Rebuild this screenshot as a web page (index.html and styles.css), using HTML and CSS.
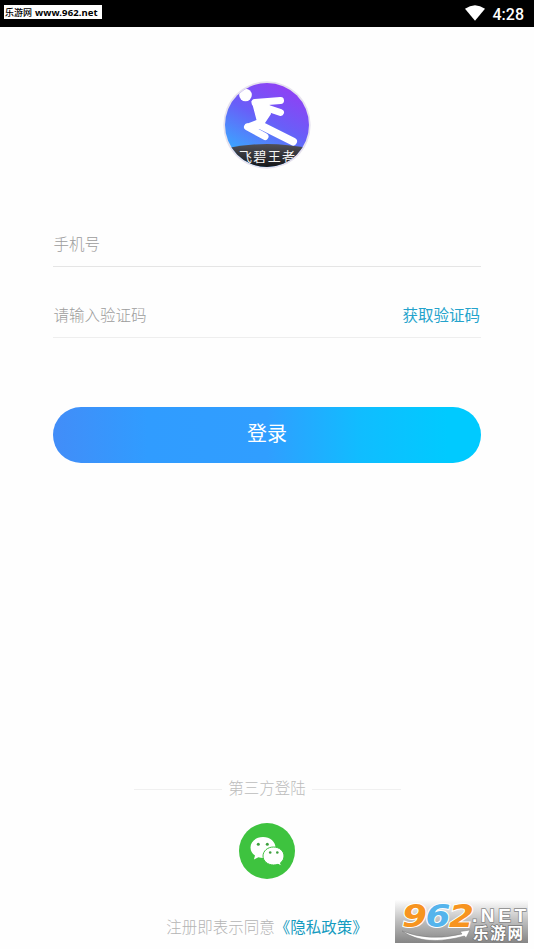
FILE: index.html
```html
<!DOCTYPE html>
<html lang="zh-CN">
<head>
<meta charset="utf-8">
<title>登录</title>
<link rel="stylesheet" href="styles.css">
</head>
<body>
<header class="status">
  <span class="site-tag"><span class="site-name">乐游网</span><span class="site-url">www.962.net</span></span>
  <span class="status-right">
    <svg class="wifi" width="20" height="16" viewBox="0 0 20 16"><path d="M0 3.8Q10-3.2 20 3.8L10 15.8Z" fill="#fff"/></svg>
    <span class="clock">4:28</span>
  </span>
</header>
<main class="page">
  <svg class="logo" width="88" height="88" viewBox="0 0 88 88">
    <defs>
      <linearGradient id="sky" x1=".7" y1="0" x2=".25" y2=".9"><stop offset="0" stop-color="#933df4"/><stop offset=".48" stop-color="#685ff8"/><stop offset="1" stop-color="#36adff"/></linearGradient>
      <linearGradient id="ground" x1="0" y1="0" x2="0" y2="1"><stop offset="0" stop-color="#515158"/><stop offset="1" stop-color="#101012"/></linearGradient>
      <clipPath id="disc"><circle cx="44" cy="44" r="42"/></clipPath>
    </defs>
    <circle cx="44" cy="44" r="43.7" fill="#e6e2ee"/>
    <g clip-path="url(#disc)">
      <path d="M0 0H88V88H0Z" fill="url(#sky)"/>
      <path d="M0 68Q44 58 88 68V88H0Z" fill="url(#ground)"/>
      <g fill="none" stroke="#fff" stroke-linejoin="round" stroke-linecap="round">
        <path d="M32 21.500L57.500 19.500M38 25L57.500 31.500" stroke-width="7"/>
        <path d="M24.500 46L42 55.500" stroke-width="7"/>
        <path d="M37 44L70 60.500" stroke-width="8"/>
      </g>
      <path d="M28.500 20L46 21L48 33L38 48L23 49L22 43.500L33.500 39Z" fill="#fff"/>
      <circle cx="22.500" cy="14" r="6.300" fill="#fff"/>
      <text class="logo-name" x="16" y="79.500" textLength="56">飞碧王者</text>
    </g>
  </svg>
  <form class="form">
    <div class="field"><span class="hint">手机号</span></div>
    <div class="field field-code"><span class="hint">请输入验证码</span><span class="link">获取验证码</span></div>
    <button class="login" type="button">登录</button>
  </form>
  <section class="third">
    <div class="divider"><span>第三方登陆</span></div>
    <svg class="wechat" width="56" height="56" viewBox="0 0 56 56">
      <circle cx="28" cy="28" r="28" fill="#3ec33f"/>
      <path d="M24 14C17 14 11.500 18.700 11.500 24.500C11.500 27.800 13.200 30.700 16 32.600L14.900 36.600L19.400 34.300Q23.500 35.600 28 34.600C34 33 36.500 29 36.500 24.500C36.500 18.700 31 14 24 14Z" fill="#fff"/>
      <path d="M34.500 24C28.600 24 24 28 24 33S28.600 42 34.500 42Q37 42 39 41.300L42.400 43L41.500 39.800C43.800 38.200 45 35.800 45 33C45 28 40.400 24 34.500 24Z" fill="#fff" stroke="#3ec33f" stroke-width="1"/>
      <g fill="#3ea03f"><circle cx="19.300" cy="21.200" r="1.500"/><circle cx="28.300" cy="21.200" r="1.500"/><circle cx="31.200" cy="29.500" r="1.300"/><circle cx="38.300" cy="29.500" r="1.300"/></g>
    </svg>
    <p class="terms"><span>注册即表示同意</span><span class="policy">《隐私政策》</span></p>
  </section>
</main>
<svg class="watermark" width="133" height="43" viewBox="0 0 133 43">
  <defs><linearGradient id="silver" x1="0" y1="0" x2="0" y2="1"><stop offset="0" stop-color="#fdfdfd"/><stop offset=".5" stop-color="#bdbdbd"/><stop offset="1" stop-color="#858585"/></linearGradient></defs>
  <path d="M0 0H133V43H0Z" fill="url(#silver)"/>
  <g class="mark-digits">
    <text x="7" y="27" textLength="25" lengthAdjust="spacingAndGlyphs" fill="#f79420">9</text>
    <text x="30.500" y="27" textLength="25" lengthAdjust="spacingAndGlyphs" fill="#55b4ec">6</text>
    <text x="54" y="27" textLength="25" lengthAdjust="spacingAndGlyphs" fill="#f79420">2</text>
  </g>
  <path d="M7 31Q34 42 67 34L65 31.500L75 30L71 38L69.500 36Q30 47 7 31Z" fill="#fff" stroke="#777" stroke-width=".5"/>
  <text class="mark-net" x="77" y="21.500" textLength="54" lengthAdjust="spacing">.NET</text>
  <text class="mark-cn" x="78" y="38.500" textLength="50">乐游网</text>
</svg>
</body>
</html>
```
FILE: styles.css
```css
* { box-sizing: border-box; }
body {
  margin: 0;
  height: 949px;
  position: relative;
  overflow: hidden;
  background: #fefefe;
  font-family: "Noto Sans CJK SC", sans-serif;
}
.status {
  height: 27px;
  background: #000;
  display: flex;
  justify-content: space-between;
  align-items: flex-start;
  padding: 5px 10px 0 4px;
}
.site-tag {
  width: 98px;
  height: 14px;
  background: #fff;
  color: #000;
  display: flex;
  align-items: center;
  gap: 3px;
  padding: 1px 0 0 1px;
  white-space: nowrap;
  line-height: 14px;
}
.site-name { font-size: 9px; font-weight: 500; }
.site-url { font: bold 9.500px/14px "Noto Sans", sans-serif; letter-spacing: .1px; }
.status-right { display: flex; gap: 8px; }
.clock { font: 500 16px/19px Roboto, sans-serif; color: #fff; }
.page { display: flex; flex-direction: column; align-items: center; }
.logo { margin-top: 54px; display: block; }
.logo-name { font-size: 13px; fill: #f6f6f6; }
.form { width: 428px; margin-top: 53px; }
.field {
  height: 45px;
  border-bottom: 1px solid #e5e5e5;
  display: flex;
  justify-content: space-between;
  align-items: flex-start;
  font-size: 15.500px;
  line-height: 42px;
}
.field-code { margin-top: 26px; border-color: #eee; }
.hint { color: #9c9c9c; font-weight: 300; padding-left: .5px; }
.link { color: #24a3cc; padding-right: 1px; }
.login {
  display: block;
  width: 428px;
  height: 56px;
  margin-top: 69px;
  border: 0;
  border-radius: 28px;
  padding: 0 0 4px;
  background: linear-gradient(90deg, #428df8 0, #309cff 22%, #309eff 50%, #10bdff 72%, #00caff 92%);
  color: #fff;
  font: 400 20px/52px "Noto Sans CJK SC", sans-serif;
}
.third { margin-top: 312px; width: 267px; display: flex; flex-direction: column; align-items: center; }
.divider {
  width: 267px;
  display: flex;
  align-items: center;
  gap: 6px;
  color: #bcbcbc;
  font-size: 15.500px;
  font-weight: 300;
  line-height: 24px;
}
.divider::before, .divider::after { content: ""; flex: 1; height: 1px; background: #f0f0f0; margin-top: 4px; }
.wechat { display: block; margin-top: 24px; }
.terms {
  margin: 35px 0 0;
  display: flex;
  font-size: 15.500px;
  font-weight: 300;
  line-height: 24px;
  color: #b4b4b4;
  white-space: nowrap;
}
.policy { color: #159bc0; font-weight: 400; }
.watermark { position: absolute; left: 395px; top: 900px; }
.mark-digits { font: italic 700 32px "DejaVu Sans", sans-serif; paint-order: stroke; stroke: #fff; stroke-width: 2px; }
.mark-net { font: 700 19px "Liberation Sans", sans-serif; fill: #fff; stroke: #888; stroke-width: 1.500px; paint-order: stroke; }
.mark-cn { font-size: 15.500px; font-weight: 700; fill: #fff; stroke: #777; stroke-width: 1.500px; paint-order: stroke; }
```
